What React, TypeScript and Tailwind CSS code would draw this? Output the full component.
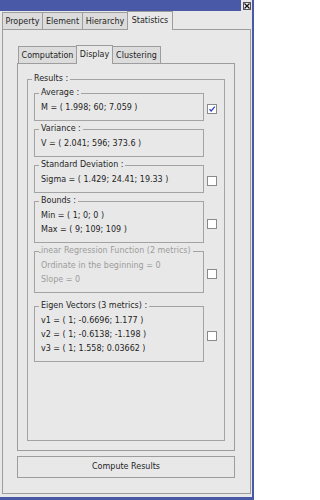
import React from "react";

type Row = {
  title: string;
  lines: string[];
  box?: "on" | "off";
  disabled?: boolean;
  clip?: boolean;
  extraTop?: boolean;
};

const rows: Row[] = [
  { title: "Average :", lines: ["M = ( 1.998; 60; 7.059 )"], box: "on" },
  { title: "Variance :", lines: ["V = ( 2.041; 596; 373.6 )"] },
  { title: "Standard Deviation :", lines: ["Sigma = ( 1.429; 24.41; 19.33 )"], box: "off" },
  { title: "Bounds :", lines: ["Min = ( 1; 0; 0 )", "Max = ( 9; 109; 109 )"], box: "off" },
  {
    title: "Linear Regression Function (2 metrics)",
    lines: ["Ordinate in the beginning = 0", "Slope = 0"],
    box: "off",
    disabled: true,
    clip: true,
  },
  {
    title: "Eigen Vectors (3 metrics) :",
    lines: ["v1 = ( 1; -0.6696; 1.177 )", "v2 = ( 1; -0.6138; -1.198 )", "v3 = ( 1; 1.558; 0.03662 )"],
    box: "off",
    extraTop: true,
  },
];

export default function App() {
  return (
    <div className="flex h-[500px] w-[254px] flex-col border-r-2 border-b-[3px] border-[#4a59a7] bg-[#e8e8e8] font-['DejaVu_Sans',sans-serif] text-[8px] text-[#1e1e1e]">
      <div className="flex h-[11px]">
        <div className="flex-1 bg-[#4a59a7]" />
        <div className="flex w-[11px] items-center justify-center">
          <div className="flex h-[8px] w-[8px] items-center justify-center border border-[#555] bg-[#f2f2f2]">
            <svg width="6" height="6" viewBox="0 0 6 6">
              <path d="M0.5 0.5 L5.5 5.5 M5.5 0.5 L0.5 5.5" stroke="#111" strokeWidth="1.2" />
            </svg>
          </div>
        </div>
      </div>

      <div className="flex h-[18px] items-end pl-[2px]">
        <Tab label="Property" w="w-[41px]" first />
        <Tab label="Element" w="w-[41px]" />
        <Tab label="Hierarchy" w="w-[46px]" />
        <Tab label="Statistics" w="w-[46px]" active />
      </div>

      <div className="ml-[2px] flex h-[465px] w-[249px] flex-col border border-[#9d9d9d] pt-[15px] pr-[15px] pb-[15px] pl-[14px]">
        <div className="flex h-[18px] items-end pl-[1px]">
          <Tab label="Computation" w="w-[59px]" first />
          <Tab label="Display" w="w-[37px]" active />
          <Tab label="Clustering" w="w-[49px]" />
        </div>

        <div className="flex h-[388px] flex-col border border-[#9d9d9d] px-[9px] pt-[10px] pb-[9px]">
          <fieldset className="min-w-0 flex-1 border border-[#a3a3a3] pt-[4px] pr-[7px] pl-[6px]">
            <legend className="-ml-[2px] px-[2px] leading-[10px]">Results :</legend>
            <div className="flex flex-col gap-[3px]">
              {rows.map((r) => (
                <ResultRow key={r.title} row={r} />
              ))}
            </div>
          </fieldset>
        </div>

        <button
          type="button"
          className="mt-[5px] flex h-[22px] items-center justify-center border border-[#9d9d9d] bg-[#e8e8e8] text-[8px] text-[#1e1e1e]"
        >
          Compute Results
        </button>
      </div>
    </div>
  );
}

function Tab({ label, w, active, first }: { label: string; w: string; active?: boolean; first?: boolean }) {
  const base = `${w} flex items-center justify-center border border-b-0 border-[#9d9d9d] whitespace-nowrap ${first ? "" : "-ml-px"}`;
  if (active) {
    return <div className={`${base} relative z-10 -mb-px h-[19px] bg-[#e8e8e8] pb-[1px]`}>{label}</div>;
  }
  return <div className={`${base} h-[17px] bg-[#dcdcdc] pt-[1px]`}>{label}</div>;
}

function ResultRow({ row }: { row: Row }) {
  return (
    <div className={`flex items-center gap-[3px] ${row.extraTop ? "mt-[5px]" : ""}`}>
      <fieldset
        className={`w-[170px] min-w-0 border border-[#a3a3a3] pt-[3px] pr-[4px] pb-[5px] pl-[6px] ${
          row.disabled ? "text-[#9c9c9c]" : ""
        }`}
      >
        {row.clip ? (
          <legend className="-ml-[2px] overflow-hidden pr-[2px] leading-[10px] whitespace-nowrap">
            <span className="-ml-[2.5px] inline-block">{row.title}</span>
          </legend>
        ) : (
          <legend className="-ml-[2px] px-[2px] leading-[10px] whitespace-nowrap">{row.title}</legend>
        )}
        {row.lines.map((l) => (
          <div key={l} className="leading-[14px] whitespace-nowrap">
            {l}
          </div>
        ))}
      </fieldset>
      {row.box && (
        <div className="mt-[8px] flex h-[10px] w-[10px] items-center justify-center border border-[#8a8a8a] bg-white">
          {row.box === "on" && (
            <svg width="8" height="8" viewBox="0 0 8 8">
              <path d="M1.5 4.2 L3.2 6 L6.8 1.6" fill="none" stroke="#3145c4" strokeWidth="1.3" />
            </svg>
          )}
        </div>
      )}
    </div>
  );
}
